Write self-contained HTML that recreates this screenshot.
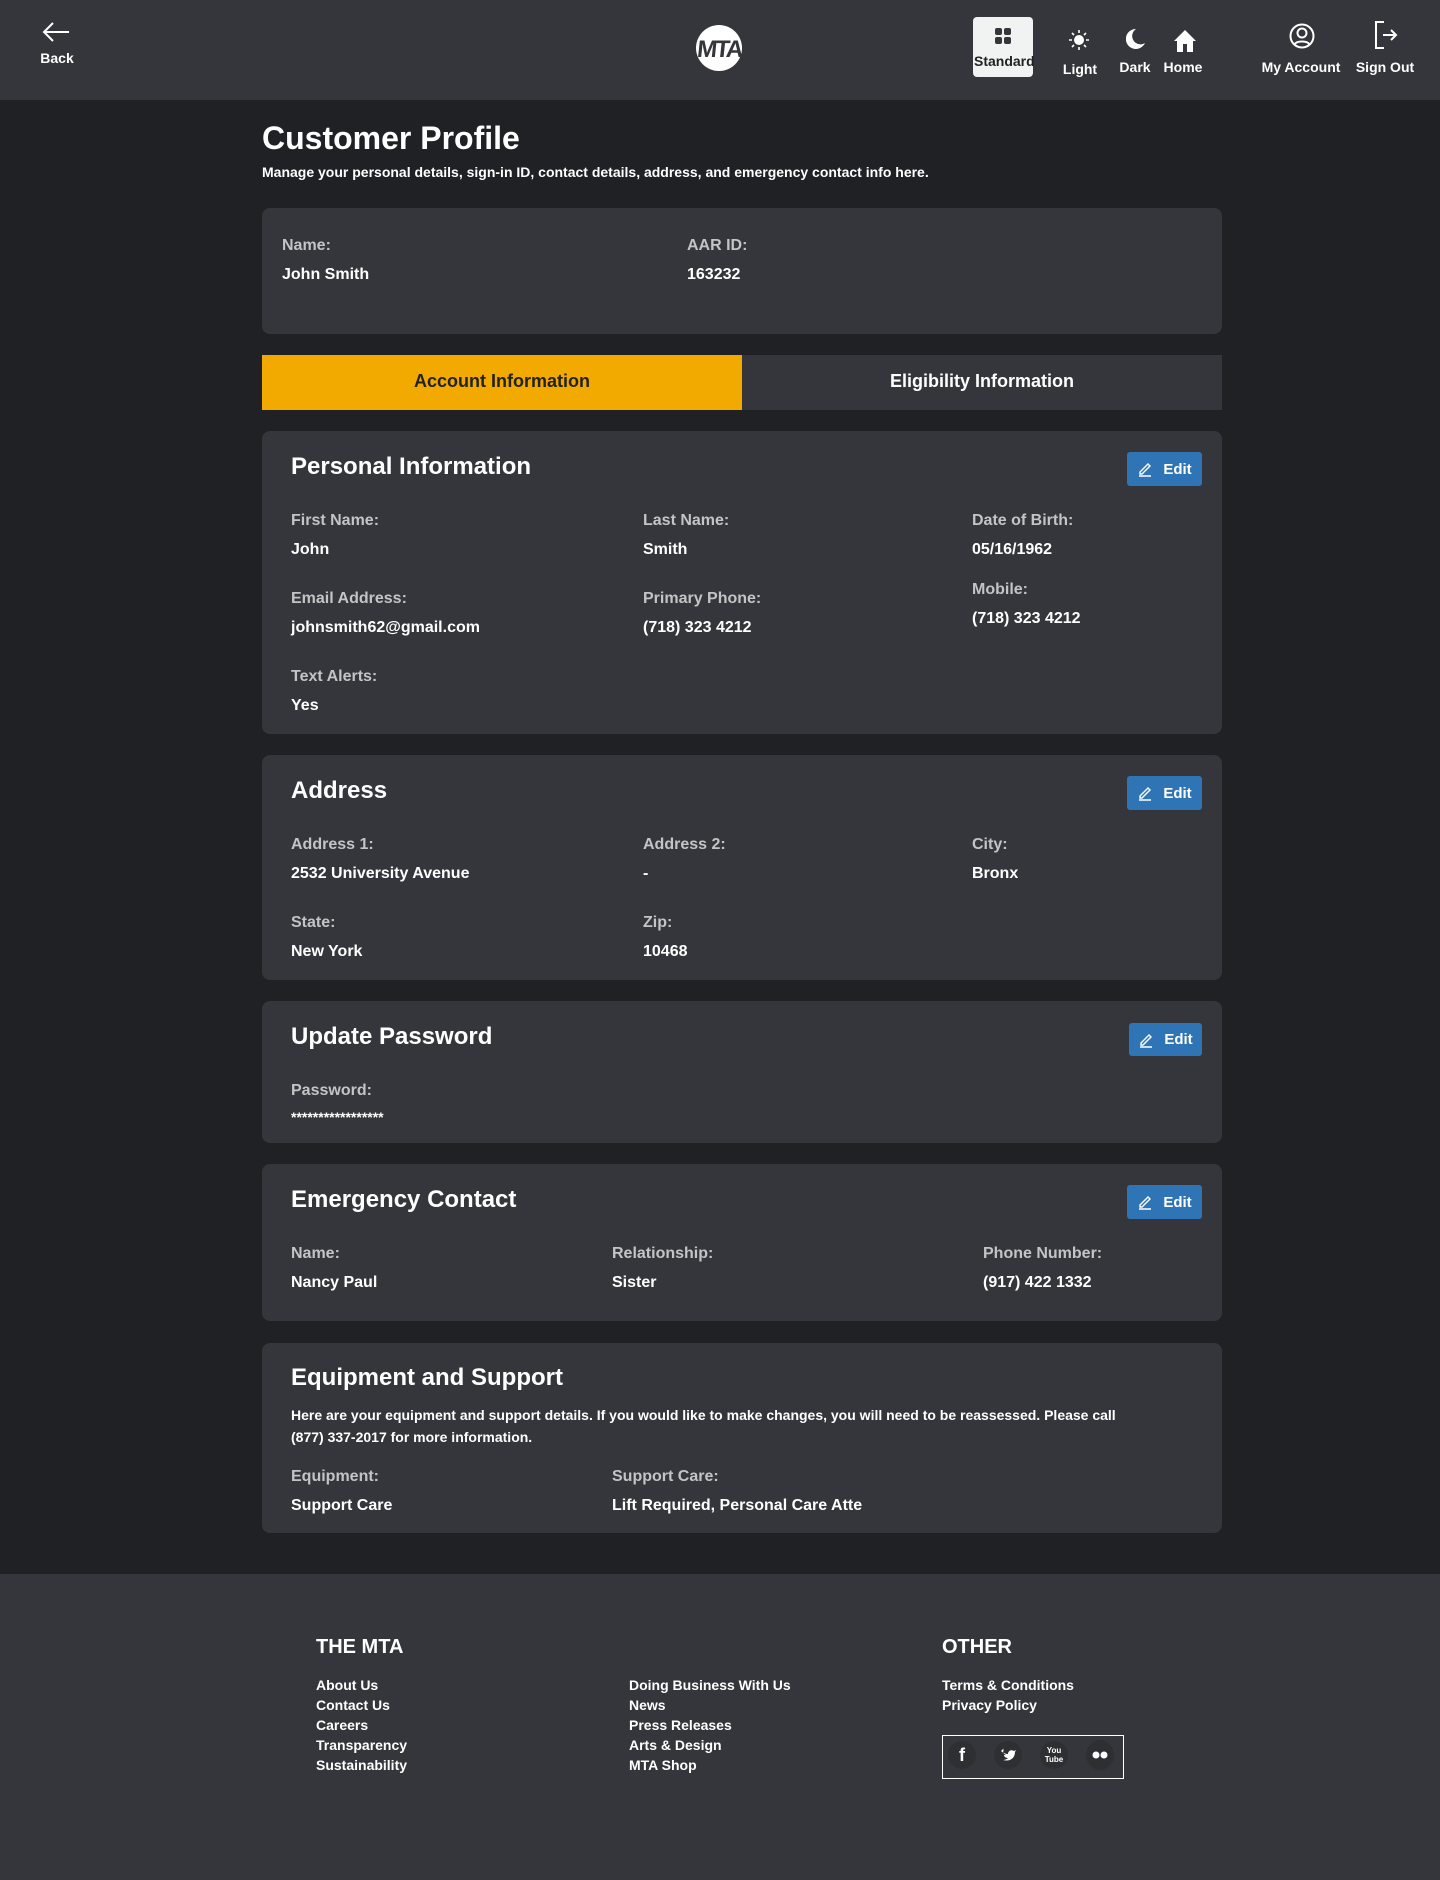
<!DOCTYPE html>
<html><head><meta charset="utf-8"><style>
*{margin:0;padding:0;box-sizing:border-box}
body{width:1440px;height:1880px;background:#202125;font-family:"Liberation Sans",Arial,sans-serif;color:#fff;position:relative;overflow:hidden}
.a{position:absolute}
.hdr{position:absolute;left:0;top:0;width:1440px;height:100px;background:#35363b}
.nav{position:absolute;font-size:14px;font-weight:bold;color:#fff;text-align:center;transform:translateX(-50%);white-space:nowrap}
.card{position:absolute;left:262px;width:960px;background:#35363b;border-radius:8px}
.h2{position:absolute;left:29px;font-size:24px;font-weight:bold}
.lb{position:absolute;font-size:16px;font-weight:bold;color:#c4c4c6}
.vl{position:absolute;font-size:16px;font-weight:bold;color:#fff}
.edit{position:absolute;right:20px;width:75px;height:34px;background:#2f74b5;border-radius:3px;font-size:15px;font-weight:bold;display:flex;align-items:center;justify-content:center;gap:10px}
.ft{position:absolute;left:0;top:1574px;width:1440px;height:306px;background:#35363b}
.fh{position:absolute;font-size:20px;font-weight:bold}
.fl{position:absolute;font-size:14px;font-weight:bold;line-height:20px}
</style></head><body>
<div class="hdr">
  <svg class="a" style="left:42px;top:22px" width="28" height="20" viewBox="0 0 28 20"><path d="M27 10H2M11 1L2 10l9 9" stroke="#fff" stroke-width="2" fill="none"/></svg>
  <div class="nav" style="left:57px;top:50px">Back</div>
  <svg class="a" style="left:696px;top:25px" width="46" height="46" viewBox="0 0 46 46"><circle cx="23" cy="23" r="23" fill="#fff"/><text x="23" y="32" font-family="Liberation Sans Narrow, Liberation Sans" font-weight="bold" font-size="24" fill="#35363b" text-anchor="middle" transform="skewX(-6) translate(3 0)" letter-spacing="-2">MTA</text></svg>
  <div class="a" style="left:973px;top:17px;width:60px;height:60px;background:#f1f2f2;border-radius:4px"></div>
  <svg class="a" style="left:995px;top:28px" width="16" height="16"><rect x="0" y="0" width="7" height="7" rx="2" fill="#35363b"/><rect x="9" y="0" width="7" height="7" rx="2" fill="#35363b"/><rect x="0" y="9" width="7" height="7" rx="2" fill="#35363b"/><rect x="9" y="9" width="7" height="7" rx="2" fill="#35363b"/></svg>
  <div class="nav" style="top:53px;color:#222;font-size:14px;width:60px;overflow:hidden;text-align:left;transform:none;left:974px">Standard</div>
  <svg class="a" style="left:1068px;top:29px" width="22" height="22" viewBox="0 0 22 22"><circle cx="11" cy="11" r="5" fill="#fff"/><g stroke="#fff" stroke-width="1.6"><path d="M11 1v3M11 18v3M1 11h3M18 11h3M4 4l2 2M16 16l2 2M4 18l2-2M16 6l2-2"/></g></svg>
  <div class="nav" style="left:1080px;top:61px">Light</div>
  <svg class="a" style="left:1126px;top:28px" width="20" height="22" viewBox="0 0 20 22"><path d="M10 1A10 10 0 1 0 19 15 8 8 0 0 1 10 1Z" fill="#fff"/></svg>
  <div class="nav" style="left:1135px;top:59px">Dark</div>
  <svg class="a" style="left:1173px;top:29px" width="24" height="24" viewBox="0 0 24 24"><path d="M12 1L1 12h3v11h6v-8h4v8h6V12h3Z" fill="#fff"/></svg>
  <div class="nav" style="left:1183px;top:59px">Home</div>
  <svg class="a" style="left:1289px;top:23px" width="26" height="26" viewBox="0 0 26 26"><circle cx="13" cy="13" r="11.5" stroke="#fff" stroke-width="2" fill="none"/><circle cx="13" cy="10" r="4.5" stroke="#fff" stroke-width="2" fill="none"/><path d="M5.5 21.5c2-4 13-4 15 0" stroke="#fff" stroke-width="2" fill="none"/></svg>
  <div class="nav" style="left:1301px;top:59px">My Account</div>
  <svg class="a" style="left:1374px;top:21px" width="24" height="28" viewBox="0 0 24 28"><path d="M10 1H2v26h8" stroke="#fff" stroke-width="2" fill="none"/><path d="M9 14h13M17 9l5 5-5 5" stroke="#fff" stroke-width="2" fill="none"/></svg>
  <div class="nav" style="left:1385px;top:59px">Sign Out</div>
</div>

<div class="a" style="left:262px;top:120px;font-size:32px;font-weight:bold">Customer Profile</div>
<div class="a" style="left:262px;top:164px;font-size:14px;font-weight:bold">Manage your personal details, sign-in ID, contact details, address, and emergency contact info here.</div>

<div class="card" style="top:208px;height:126px">
  <div class="lb" style="left:20px;top:29px">Name:</div><div class="vl" style="left:20px;top:58px">John Smith</div>
  <div class="lb" style="left:425px;top:29px">AAR ID:</div><div class="vl" style="left:425px;top:58px">163232</div>
</div>

<div class="a" style="left:262px;top:355px;width:480px;height:55px;background:#f2a900;color:#222;font-size:18px;font-weight:bold;text-align:center;line-height:52px">Account Information</div>
<div class="a" style="left:742px;top:355px;width:480px;height:55px;background:#35363b;font-size:18px;font-weight:bold;text-align:center;line-height:52px">Eligibility Information</div>

<svg width="0" height="0" style="position:absolute"><defs><symbol id="pen" viewBox="0 0 16 16"><path d="M3 11L11 3l2 2-8 8H3z M2 15h12" stroke="#fff" stroke-width="1.4" fill="none"/></symbol></defs></svg>

<div class="card" style="top:431px;height:303px">
  <div class="h2" style="top:22px">Personal Information</div>
  <div class="edit" style="top:21px"><svg width="16" height="16"><use href="#pen"/></svg>Edit</div>
  <div class="lb" style="left:29px;top:81px">First Name:</div><div class="vl" style="left:29px;top:110px">John</div>
  <div class="lb" style="left:381px;top:81px">Last Name:</div><div class="vl" style="left:381px;top:110px">Smith</div>
  <div class="lb" style="left:710px;top:81px">Date of Birth:</div><div class="vl" style="left:710px;top:110px">05/16/1962</div>
  <div class="lb" style="left:29px;top:159px">Email Address:</div><div class="vl" style="left:29px;top:188px">johnsmith62@gmail.com</div>
  <div class="lb" style="left:381px;top:159px">Primary Phone:</div><div class="vl" style="left:381px;top:188px">(718) 323 4212</div>
  <div class="lb" style="left:710px;top:150px">Mobile:</div><div class="vl" style="left:710px;top:179px">(718) 323 4212</div>
  <div class="lb" style="left:29px;top:237px">Text Alerts:</div><div class="vl" style="left:29px;top:266px">Yes</div>
</div>

<div class="card" style="top:755px;height:225px">
  <div class="h2" style="top:22px">Address</div>
  <div class="edit" style="top:21px"><svg width="16" height="16"><use href="#pen"/></svg>Edit</div>
  <div class="lb" style="left:29px;top:81px">Address 1:</div><div class="vl" style="left:29px;top:110px">2532 University Avenue</div>
  <div class="lb" style="left:381px;top:81px">Address 2:</div><div class="vl" style="left:381px;top:110px">-</div>
  <div class="lb" style="left:710px;top:81px">City:</div><div class="vl" style="left:710px;top:110px">Bronx</div>
  <div class="lb" style="left:29px;top:159px">State:</div><div class="vl" style="left:29px;top:188px">New York</div>
  <div class="lb" style="left:381px;top:159px">Zip:</div><div class="vl" style="left:381px;top:188px">10468</div>
</div>

<div class="card" style="top:1001px;height:142px">
  <div class="h2" style="top:22px">Update Password</div>
  <div class="edit" style="top:22px;width:73px;height:33px"><svg width="16" height="16"><use href="#pen"/></svg>Edit</div>
  <div class="lb" style="left:29px;top:81px">Password:</div><div class="vl" style="left:29px;top:108px;font-size:14px">*****************</div>
</div>

<div class="card" style="top:1164px;height:157px">
  <div class="h2" style="top:22px">Emergency Contact</div>
  <div class="edit" style="top:21px"><svg width="16" height="16"><use href="#pen"/></svg>Edit</div>
  <div class="lb" style="left:29px;top:81px">Name:</div><div class="vl" style="left:29px;top:110px">Nancy Paul</div>
  <div class="lb" style="left:350px;top:81px">Relationship:</div><div class="vl" style="left:350px;top:110px">Sister</div>
  <div class="lb" style="left:721px;top:81px">Phone Number:</div><div class="vl" style="left:721px;top:110px">(917) 422 1332</div>
</div>

<div class="card" style="top:1343px;height:190px">
  <div class="h2" style="top:21px">Equipment and Support</div>
  <div class="a" style="left:29px;top:61px;font-size:14px;font-weight:bold;line-height:22px;width:860px">Here are your equipment and support details. If you would like to make changes, you will need to be reassessed. Please call (877) 337-2017 for more information.</div>
  <div class="lb" style="left:29px;top:125px">Equipment:</div><div class="vl" style="left:29px;top:154px">Support Care</div>
  <div class="lb" style="left:350px;top:125px">Support Care:</div><div class="vl" style="left:350px;top:154px">Lift Required, Personal Care Atte</div>
</div>

<div class="ft">
  <div class="fh" style="left:316px;top:62px">THE MTA</div>
  <div class="fl" style="left:316px;top:101px">About Us<br>Contact Us<br>Careers<br>Transparency<br>Sustainability</div>
  <div class="fl" style="left:629px;top:101px">Doing Business With Us<br>News<br>Press Releases<br>Arts &amp; Design<br>MTA Shop</div>
  <div class="fh" style="left:942px;top:62px">OTHER</div>
  <div class="fl" style="left:942px;top:101px">Terms &amp; Conditions<br>Privacy Policy</div>
  <div class="a" style="left:942px;top:161px;width:182px;height:44px;border:1.5px solid #fff"></div>
  <div class="a" style="left:948px;top:167px;width:28px;height:28px;border-radius:50%;background:#2e2f33;text-align:center;font-weight:bold;font-size:18px;line-height:28px">f</div>
  <div class="a" style="left:994px;top:167px;width:28px;height:28px;border-radius:50%;background:#2e2f33"><svg width="28" height="28" viewBox="0 0 28 28"><path d="M7 10c2 2 5 3 7 3 0-3 3-5 6-3l2-1-1 2c0 6-5 10-12 8 2 0 4-1 5-2-3 0-4-2-4-3h2c-2-1-3-2-3-4l2 1c-2-1-2-3-1-4z" fill="#fff"/></svg></div>
  <div class="a" style="left:1040px;top:167px;width:28px;height:28px;border-radius:50%;background:#2e2f33;text-align:center;font-size:8px;font-weight:bold;line-height:9px;padding-top:5px">You<br>Tube</div>
  <div class="a" style="left:1086px;top:166px;width:28px;height:30px;border-radius:50%;background:#2e2f33"><svg width="28" height="30"><circle cx="10" cy="15" r="3.5" fill="#fff"/><circle cx="18" cy="15" r="3.5" fill="#fff"/></svg></div>
</div>
</body></html>
